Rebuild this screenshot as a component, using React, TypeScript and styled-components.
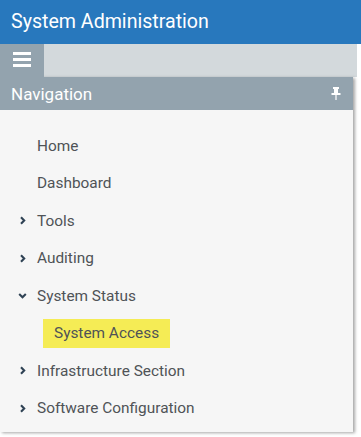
import React from 'react';
import styled, { createGlobalStyle } from 'styled-components';

const GlobalStyle = createGlobalStyle`
  html, body {
    margin: 0;
    padding: 0;
    background: #ffffff;
    font-family: Roboto, "Liberation Sans", sans-serif;
  }
`;

type NavItem = {
  label: string;
  state?: 'closed' | 'open';
  children?: { label: string; active?: boolean }[];
};

const items: NavItem[] = [
  { label: 'Home' },
  { label: 'Dashboard' },
  { label: 'Tools', state: 'closed' },
  { label: 'Auditing', state: 'closed' },
  { label: 'System Status', state: 'open', children: [{ label: 'System Access', active: true }] },
  { label: 'Infrastructure Section', state: 'closed' },
  { label: 'Software Configuration', state: 'closed' },
];

const Chevron: React.FC<{ open?: boolean }> = ({ open }) => (
  <svg width="9" height="9" viewBox="0 0 9 9">
    {open ? (
      <path d="M1.2 3 L4.5 6.2 L7.8 3" fill="none" stroke="#2f4254" strokeWidth="2.1" />
    ) : (
      <path d="M3 1.2 L6.2 4.5 L3 7.8" fill="none" stroke="#2f4254" strokeWidth="2.1" />
    )}
  </svg>
);

const PinIcon = () => (
  <svg width="10" height="13" viewBox="0 0 10 13">
    <rect x="2" y="0" width="6" height="2" fill="#fff" />
    <rect x="3" y="2" width="4" height="4" fill="#fff" />
    <rect x="0.5" y="6" width="9" height="2" fill="#fff" />
    <rect x="4.4" y="8" width="1.2" height="5" fill="#fff" />
  </svg>
);

const App: React.FC = () => {
  return (
    <Page>
      <GlobalStyle />
      <Header>System Administration</Header>
      <Toolbar>
        <MenuButton>
          <Bar />
          <Bar />
          <Bar />
        </MenuButton>
      </Toolbar>
      <Panel>
        <PanelHeader>
          <span>Navigation</span>
          <PinIcon />
        </PanelHeader>
        <NavList>
          {items.map((item) => (
            <React.Fragment key={item.label}>
              <NavRow>
                <Arrow>{item.state && <Chevron open={item.state === 'open'} />}</Arrow>
                {item.label}
              </NavRow>
              {item.children?.map((child) => (
                <SubRow key={child.label}>
                  <SubLabel $active={child.active}>{child.label}</SubLabel>
                </SubRow>
              ))}
            </React.Fragment>
          ))}
        </NavList>
      </Panel>
    </Page>
  );
};

const Page = styled.div`
  width: 361px;
  height: 437px;
  overflow: hidden;
`;

const Header = styled.div`
  height: 44px;
  background: #2878bd;
  color: #fff;
  font-size: 19.6px;
  display: flex;
  align-items: center;
  padding-left: 11px;
  padding-bottom: 1px;
  box-sizing: border-box;
`;

const Toolbar = styled.div`
  width: 357px;
  height: 33px;
  background: #d3d9dc;
  display: flex;
`;

const MenuButton = styled.div`
  width: 44px;
  background: #93a3ae;
  display: flex;
  flex-direction: column;
  align-items: center;
  justify-content: center;
  gap: 3px;
  padding-bottom: 2px;
  box-sizing: border-box;
`;

const Bar = styled.div`
  width: 18px;
  height: 3px;
  background: #fff;
`;

const Panel = styled.div`
  width: 353px;
  height: 355px;
  background: #f6f6f6;
  box-shadow: 2px 1px 3px rgba(0, 0, 0, 0.35);
  display: flex;
  flex-direction: column;
`;

const PanelHeader = styled.div`
  height: 33px;
  background: #93a3ae;
  color: #fff;
  font-size: 17px;
  display: flex;
  align-items: center;
  justify-content: space-between;
  padding: 0 12px 0 11px;
  box-sizing: border-box;
`;

const NavList = styled.div`
  padding-top: 17px;
  display: flex;
  flex-direction: column;
`;

const NavRow = styled.div`
  height: 37.5px;
  display: flex;
  align-items: center;
  font-size: 15.4px;
  color: #4f5357;
`;

const Arrow = styled.span`
  width: 37px;
  display: flex;
  justify-content: flex-end;
  padding-right: 10px;
  box-sizing: border-box;
`;

const SubRow = styled.div`
  height: 37.5px;
  display: flex;
  align-items: center;
  padding-left: 43px;
`;

const SubLabel = styled.span<{ $active?: boolean }>`
  height: 29px;
  display: flex;
  align-items: center;
  padding: 0 11px;
  font-size: 15.4px;
  color: #4f5357;
  background: ${(p) => (p.$active ? '#f5ec55' : 'transparent')};
`;

export default App;
